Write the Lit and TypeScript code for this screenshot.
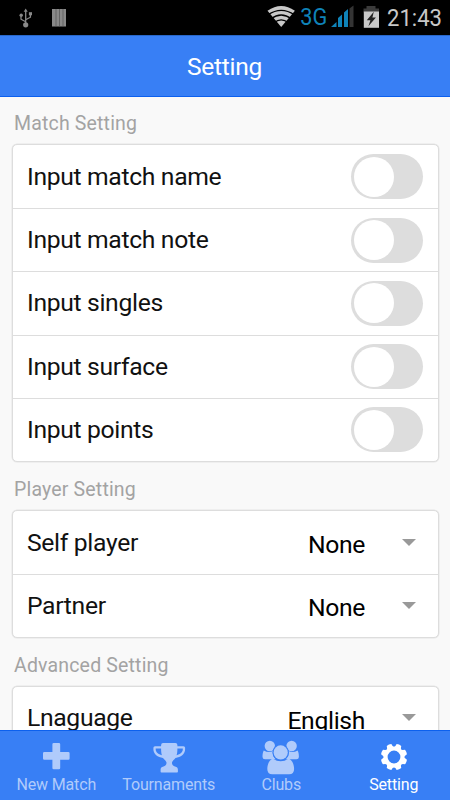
import { LitElement, html, svg, css } from "lit";
import { customElement, property } from "lit/decorators.js";

const gearPath = (): string => {
  const pts: string[] = [];
  for (let i = 0; i < 8; i++) {
    const a = (i * Math.PI) / 4 + Math.PI / 8;
    const p = (r: number, d: number) =>
      `${(20 + r * Math.cos(a + d)).toFixed(2)} ${(18 + r * Math.sin(a + d)).toFixed(2)}`;
    pts.push(`${i ? "L" : "M"}${p(11.2, -0.27)}L${p(13.2, -0.19)}Q${p(13.7, 0)} ${p(13.2, 0.19)}L${p(11.2, 0.27)}`);
    pts.push(`Q${p(9.8, Math.PI / 8)} ${p(11.2, Math.PI / 4 - 0.27)}`);
  }
  return pts.join("") + "ZM26.4 18a6.4 6.4 0 1 0-12.8 0a6.4 6.4 0 1 0 12.8 0Z";
};

const icons: Record<string, unknown> = {
  plus: svg`<path d="M17.7 4h5.2a1.3 1.3 0 0 1 1.3 1.3v7.7h8.1a1.3 1.3 0 0 1 1.3 1.3v5.2a1.3 1.3 0 0 1-1.3 1.3h-8.1v8.2a1.3 1.3 0 0 1-1.3 1.3h-5.2a1.3 1.3 0 0 1-1.3-1.3v-8.2H8.3a1.3 1.3 0 0 1-1.3-1.3v-5.2a1.3 1.3 0 0 1 1.3-1.3h8.1V5.3A1.3 1.3 0 0 1 17.7 4Z"/>`,
  trophy: svg`<path fill-rule="evenodd" d="M14 3.900h12.400q1.900 0 2 2v1.300h6.100q1.600 0 1.600 1.600v1.800c0 4.300-4.400 8-9.600 8.300c-1.300 1.700-3.300 2.800-3.500 4.700c-.2 2.400 1.200 3.400 3 3.800c2 .4 2.900 1.500 2.900 3.200v2.200q0 .8-.8.8H12.400q-.8 0-.8-.8v-2.200c0-1.700.9-2.800 2.900-3.200c1.800-.4 3.200-1.400 3-3.800c-.2-1.900-2.200-3-3.500-4.700C8.800 18.600 4.400 14.900 4.400 10.600V8.800q0-1.600 1.600-1.600h6.100V5.900q.1-2 1.900-2ZM12.100 9.500H6.700v1.100c0 2.400 2.700 5 6.200 5.700c-.6-1.800-.8-4-.8-6.800ZM28.400 9.500c0 2.800-.2 5-.8 6.800c3.500-.7 6.200-3.300 6.200-5.700V9.500Z"/>`,
  group: svg`
    <circle cx="8.800" cy="7" r="5.200"/><circle cx="30.600" cy="7" r="5.200"/>
    <path d="M2.800 11.500q2.600 1.600 5.400 1.600q2 0 3.600-1c-.5 3.600.6 6.300 3 8.200H4q-2.400 0-2.500-2.400c0-2.500.4-4.800 1.300-6.400Z"/>
    <path d="M36.600 11.500q-2.600 1.600-5.400 1.600q-2 0-3.600-1c.5 3.600-.6 6.300-3 8.200h10.800q2.400 0 2.500-2.400c0-2.500-.4-4.800-1.300-6.400Z"/>
    <path d="M12 19.800q7.700 5 15.400 0c3.300.7 5.700 5 5.700 10.200q0 5.300-5 5.300H11.300q-5 0-5-5.300c0-5.200 2.400-9.500 5.700-10.200Z"/>
    <circle class="gap" cx="19.700" cy="13.400" r="8.200"/>
    <circle cx="19.700" cy="13.400" r="7.100"/>`,
  gear: svg`<path fill-rule="evenodd" d="${gearPath()}"/>`,
};

@customElement("status-bar")
export class StatusBar extends LitElement {
  static styles = css`
    :host { display: flex; justify-content: space-between; height: 35px; background: #000; flex: none; }
    svg { display: block; }
    text { font-family: Roboto, sans-serif; }
  `;
  render() {
    return html`
      <svg width="100" height="35" fill="#898989">
        <path d="M25.700 8.500l2 3.200h-4Z"/>
        <path d="M25.700 11v13M25.700 21.800l-4.700-2.600v-3M25.700 19.800l4.700-2.600v-3" fill="none" stroke="#898989" stroke-width="1.300"/>
        <circle cx="25.700" cy="24.800" r="2.600"/><circle cx="21.200" cy="15.300" r="1.700"/>
        <rect x="28.900" y="12.200" width="3.100" height="3.100"/>
        <rect x="52" y="9" width="14" height="17.500"/>
        <path d="M56 9v17.500M59.500 9v17.500M63 9v17.500" stroke="#555" stroke-width=".7"/>
      </svg>
      <svg width="190" height="35" viewBox="260 0 190 35">
        <path d="M281.200 27L267.500 10.800Q281.200 1.400 294.900 10.800Z" fill="#c8c8c8"/>
        <path d="M268 14.800Q281.200 5.800 294.400 14.800M271 18.800Q281.200 11.200 291.400 18.800M274 22.800Q281.200 17 288.400 22.800" fill="none" stroke="#000" stroke-width="1.300"/>
        <text x="300.300" y="25" font-size="23.500" textLength="27" lengthAdjust="spacingAndGlyphs" fill="#0f83b8">3G</text>
        <path d="M331 27l5.500-5V27ZM338 20.700l4-3.600V27h-4ZM344 15.200l4-3.600V27h-4Z" fill="#0f83b8"/>
        <path d="M338 18l4-3.600V27h-4ZM344 12.500l4-3.600V27h-4Z" fill="#0f83b8"/>
        <path d="M349.500 8.500l4-3v21.500h-4Z" fill="#343434"/>
        <path d="M366.500 6h9v2.500h3.500v4h-15.500v-4h3Z" fill="#3b3b3b"/>
        <path d="M363.800 11.500h15.200v16.300h-15.200Z" fill="#c8c8c8"/>
        <path d="M373.800 11.800l-7 8.500h3.600l-2 6l7.500-8.800h-3.500Z" fill="#222"/>
        <text x="387" y="26.300" font-size="23.500" textLength="55" lengthAdjust="spacingAndGlyphs" fill="#c8c8c8">21:43</text>
      </svg>`;
  }
}

@customElement("setting-row")
export class SettingRow extends LitElement {
  @property() label = "";
  @property() value = "";
  static styles = css`
    :host { display: flex; box-sizing: border-box; height: 63.200px; align-items: center; padding: 0 14.500px 0 14.500px; justify-content: space-between; }
    .label { font-size: 24.700px; line-height: 30px; letter-spacing: -.33px; color: #111; white-space: nowrap; }
    .toggle { box-sizing: border-box; width: 72px; height: 45px; border-radius: 23px; background: #ddd; padding: 2.500px; }
    .knob { width: 40px; height: 40px; border-radius: 50%; background: #fff; }
    .select { display: flex; align-items: center; padding-right: 7.500px; }
    .value { font-size: 24.700px; line-height: 30px; letter-spacing: -.33px; color: #000; margin-right: 36.500px; padding-top: 5px; }
    .arrow { border: 7px solid transparent; border-top-color: #999; border-bottom: 0; margin-top: -1px; }
  `;
  render() {
    return html`
      <span class="label">${this.label}</span>
      ${this.value
        ? html`<div class="select"><span class="value">${this.value}</span><span class="arrow"></span></div>`
        : html`<div class="toggle"><div class="knob"></div></div>`}`;
  }
}

@customElement("app-root")
export class AppRoot extends LitElement {
  static styles = css`
    :host { display: flex; flex-direction: column; height: 800px; width: 450px; overflow: hidden; background: #f9f9f9; font-family: Roboto, sans-serif; }
    .header { box-sizing: border-box; flex: none; height: 62px; background: #387ff5; border-top: 1px solid #2867c9; border-bottom: 1px solid #0c60ee; color: #fff; font-size: 24.500px; letter-spacing: -.25px; display: flex; align-items: center; justify-content: center; padding-right: 1px; }
    .content { flex: 1; min-height: 0; overflow: hidden; padding: 0 11.500px; }
    .heading { box-sizing: border-box; height: 48.200px; padding: 15px 0 0 2.500px; font-size: 19.500px; line-height: 26px; letter-spacing: .17px; color: #a3a3a3; }
    .heading.first { height: 47px; padding-top: 14px; }
    .card { box-sizing: border-box; border: 1px solid #ddd; border-radius: 5px; background: #fff; box-shadow: 0 0 0 .5px #e6e6e6; }
    .card setting-row + setting-row { border-top: 1px solid #ddd; }
    .selects setting-row { height: 62.800px; }
    .tabs { box-sizing: border-box; flex: none; height: 70.500px; background: #387ff5; border-top: 1px solid #0c60ee; display: flex; }
    .tab { flex: 1; display: flex; flex-direction: column; align-items: center; padding-top: 8.300px; color: #b0cbfb; font-size: 16px; line-height: 19px; letter-spacing: -.15px; }
    .tab svg { display: block; fill: currentColor; width: 40px; height: 36px; }
    .gap { fill: #387ff5; }
    .active { color: #fff; }
  `;
  render() {
    const toggles = ["Input match name", "Input match note", "Input singles", "Input surface", "Input points"];
    const tabs = [
      ["plus", "New Match"],
      ["trophy", "Tournaments"],
      ["group", "Clubs"],
      ["gear", "Setting"],
    ];
    return html`
      <status-bar></status-bar>
      <div class="header">Setting</div>
      <div class="content">
        <div class="heading first">Match Setting</div>
        <div class="card">${toggles.map((t) => html`<setting-row label=${t}></setting-row>`)}</div>
        <div class="heading">Player Setting</div>
        <div class="card selects">
          <setting-row label="Self player" value="None"></setting-row>
          <setting-row label="Partner" value="None"></setting-row>
        </div>
        <div class="heading">Advanced Setting</div>
        <div class="card selects"><setting-row label="Lnaguage" value="English"></setting-row></div>
      </div>
      <div class="tabs">
        ${tabs.map(
          ([icon, name]) => html`<div class="tab ${name === "Setting" ? "active" : ""}">
            <svg viewBox="0 0 40 36">${icons[icon]}</svg><span>${name}</span>
          </div>`
        )}
      </div>`;
  }
}
